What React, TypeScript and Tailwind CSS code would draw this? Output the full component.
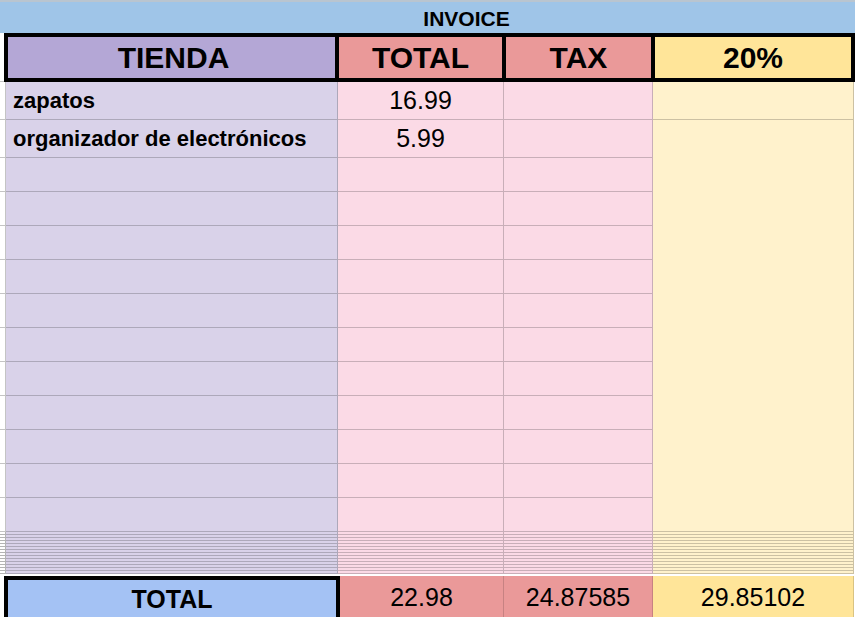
import React from "react";

const font = { fontFamily: '"Liberation Sans", Arial, sans-serif' };

const items = [
  { name: "zapatos", total: "16.99" },
  { name: "organizador de electrónicos", total: "5.99" },
];

const emptyRows = Array.from({ length: 11 });
const thinRows = Array.from({ length: 14 });

export default function App() {
  return (
    <div className="w-[855px] h-[617px] overflow-hidden bg-white text-black" style={font}>
      {/* ---------- TITLE ---------- */}
      <div className="h-[33px] bg-[#9fc5e8] border-t-2 border-[#b9c5d0] flex items-center justify-center pl-[78px] pt-[2px]">
        <span className="text-[21px] font-bold leading-none">INVOICE</span>
      </div>

      {/* ---------- HEADER ---------- */}
      <div className="flex h-[49px]">
        <div className="w-[4px] border-b border-[#c4c4c4]" />
        <div className="flex w-[851px] border-4 border-black text-[30px] font-bold">
          <div className="w-[331px] border-r-4 border-black bg-[#b4a7d6] flex items-center justify-center pl-[4px]">
            TIENDA
          </div>
          <div className="w-[167px] border-r-4 border-black bg-[#ea9999] flex items-center justify-center">
            TOTAL
          </div>
          <div className="w-[149px] border-r-4 border-black bg-[#ea9999] flex items-center justify-center">
            TAX
          </div>
          <div className="flex-1 bg-[#ffe599] flex items-center justify-center">20%</div>
        </div>
      </div>

      {/* ---------- BODY ---------- */}
      <div className="grid grid-cols-[6px_332px_166px_149px_201px] grid-rows-[38px_38px_repeat(11,34px)]">
        {items.map((item, i) => (
          <React.Fragment key={i}>
            <div className="border-r border-b border-[#c4c4c4]" />
            <div className="bg-[#d9d2e9] border-r border-b border-black/20 flex items-center pl-[7px] text-[22px] font-bold">
              {item.name}
            </div>
            <div className="bg-[#fbdae6] border-r border-b border-black/20 flex items-center justify-center text-[25px]">
              {item.total}
            </div>
            <div className="bg-[#fbdae6] border-r border-b border-black/20" />
            {i === 0 ? (
              <div className="bg-[#fff2cc] border-r border-b border-black/20" />
            ) : (
              <div className="row-span-12 bg-[#fff2cc] border-r border-b border-black/20" />
            )}
          </React.Fragment>
        ))}
        {emptyRows.map((_, i) => (
          <React.Fragment key={i}>
            <div className="border-r border-b border-[#c4c4c4]" />
            <div className="bg-[#d9d2e9] border-r border-b border-black/20" />
            <div className="bg-[#fbdae6] border-r border-b border-black/20" />
            <div className="bg-[#fbdae6] border-r border-b border-black/20" />
          </React.Fragment>
        ))}
      </div>

      {/* squeezed rows */}
      <div className="grid grid-cols-[6px_332px_166px_149px_201px]">
        {thinRows.map((_, i) => (
          <React.Fragment key={i}>
            <div className="h-[3px] border-r border-b border-[#b4b4b4]" />
            <div className="h-[3px] bg-[#d9d2e9] border-r border-b border-black/20" />
            <div className="h-[3px] bg-[#fbdae6] border-r border-b border-black/20" />
            <div className="h-[3px] bg-[#fbdae6] border-r border-b border-black/20" />
            <div className="h-[3px] bg-[#fff2cc] border-r border-b border-black/20" />
          </React.Fragment>
        ))}
      </div>

      {/* ---------- TOTAL ROW ---------- */}
      <div className="flex h-[46px] mt-[2px] text-[25px]">
        <div className="w-[4px]" />
        <div className="w-[336px] border-4 border-b-0 border-black bg-[#a4c2f4] flex items-center justify-center font-bold pb-[2px]">
          TOTAL
        </div>
        <div className="w-[164px] bg-[#ea9999] border-r border-black/15 flex items-center justify-center pb-[2px]">
          22.98
        </div>
        <div className="w-[149px] bg-[#ea9999] border-r border-black/15 flex items-center justify-center pb-[2px]">
          24.87585
        </div>
        <div className="w-[201px] bg-[#ffe599] border-r border-black/15 flex items-center justify-center pb-[2px]">
          29.85102
        </div>
      </div>
    </div>
  );
}
